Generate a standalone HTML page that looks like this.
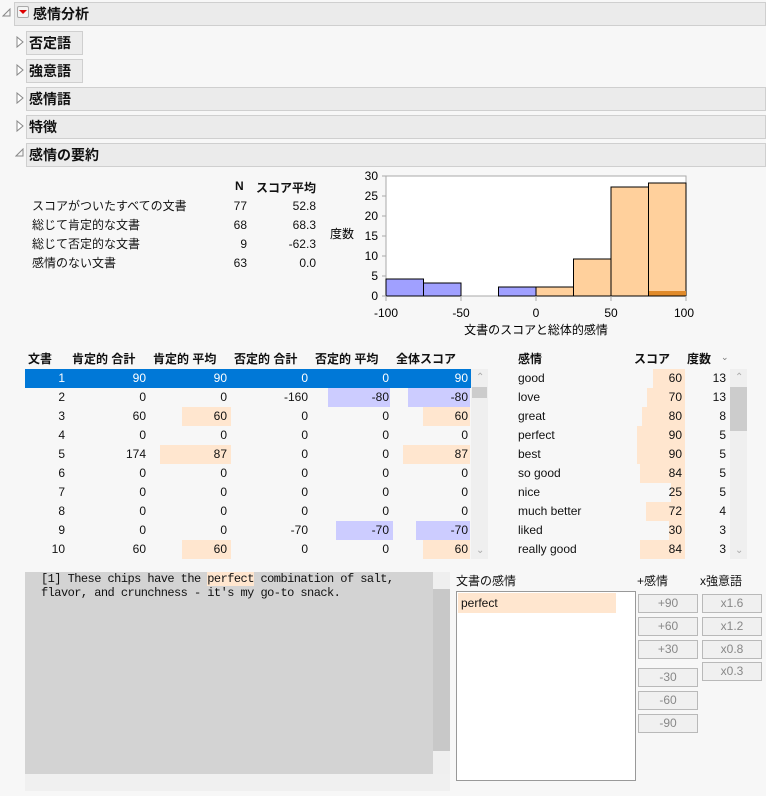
<!DOCTYPE html>
<html><head><meta charset="utf-8"><style>
*{margin:0;padding:0;box-sizing:border-box}
body{width:766px;height:796px;background:#f7f7f7;font-family:"Liberation Sans","Noto Sans CJK JP",sans-serif;font-size:12px;color:#111;position:relative;overflow:hidden}
.a{position:absolute}
.hdr{position:absolute;background:#ebebeb;border:1px solid #cfcfcf;font-weight:bold;font-size:14px;padding-left:2px;line-height:22px}
.r{text-align:right}
.btn{position:absolute;width:60px;height:19px;border:1px solid #b9b9b9;background:#f0f0f0;color:#888;text-align:center;line-height:17px;font-size:12px}
</style></head><body>
<div class="hdr" style="left:14px;top:2px;width:752px;height:24px;padding-left:18px">感情分析</div>
<svg class="a" style="left:2px;top:8px" width="10" height="10"><path d="M8 1 L8 8 L1 8 Z" fill="none" stroke="#888"/></svg>
<div class="a" style="left:17px;top:6px;width:12px;height:12px;border:1px solid #aaa;background:#f4f4f4;border-radius:2px"></div>
<svg class="a" style="left:19px;top:10px" width="8" height="5"><path d="M0 0 L8 0 L4 4 Z" fill="#d00"/></svg>

<div class="hdr" style="left:26px;top:31px;width:57px;height:24px">否定語</div>
<div class="hdr" style="left:26px;top:59px;width:57px;height:24px">強意語</div>
<div class="hdr" style="left:26px;top:87px;width:740px;height:24px">感情語</div>
<div class="hdr" style="left:26px;top:115px;width:740px;height:24px">特徴</div>
<div class="hdr" style="left:26px;top:143px;width:740px;height:24px">感情の要約</div>
<svg class="a" style="left:16px;top:36px" width="9" height="110"><path d="M1 1 L7 6 L1 11 Z M1 29 L7 34 L1 39 Z M1 57 L7 62 L1 67 Z M1 85 L7 90 L1 95 Z" fill="#fff" stroke="#888"/></svg>
<svg class="a" style="left:15px;top:148px" width="10" height="10"><path d="M8 1 L8 8 L1 8 Z" fill="none" stroke="#888"/></svg>

<div class="a" style="left:235px;top:179px;font-weight:bold">N</div>
<div class="a" style="left:256px;top:179px;font-weight:bold">スコア平均</div>
<div class="a" style="left:32px;top:197px;line-height:19px">スコアがついたすべての文書<br>総じて肯定的な文書<br>総じて否定的な文書<br>感情のない文書</div>
<div class="a r" style="left:200px;top:197px;width:47px;line-height:19px">77<br>68<br>9<br>63</div>
<div class="a r" style="left:260px;top:197px;width:56px;line-height:19px">52.8<br>68.3<br>-62.3<br>0.0</div>

<svg class="a" style="left:328px;top:166px" width="380" height="180" font-family="Liberation Sans, Noto Sans CJK JP, sans-serif" font-size="12">
<rect x="58" y="10" width="300" height="120" fill="#fff" stroke="#aaa"/>
<g stroke="#000" stroke-width="1">
<rect x="58" y="113" width="37.5" height="17" fill="#a0a0ff"/>
<rect x="95.5" y="117" width="37.5" height="13" fill="#a0a0ff"/>
<rect x="170.5" y="121" width="37.5" height="9" fill="#a0a0ff"/>
<rect x="208" y="121" width="37.5" height="9" fill="#ffd09c"/>
<rect x="245.5" y="93" width="37.5" height="37" fill="#ffd09c"/>
<rect x="283" y="21" width="37.5" height="109" fill="#ffd09c"/>
<rect x="320.5" y="17" width="37.5" height="113" fill="#ffd09c"/>
</g>
<rect x="321" y="125" width="37" height="4.5" fill="#e08a2a"/>
<g stroke="#aaa"><line x1="54" y1="10" x2="58" y2="10"/><line x1="54" y1="30" x2="58" y2="30"/><line x1="54" y1="50" x2="58" y2="50"/><line x1="54" y1="70" x2="58" y2="70"/><line x1="54" y1="90" x2="58" y2="90"/><line x1="54" y1="110" x2="58" y2="110"/><line x1="54" y1="130" x2="58" y2="130"/>
<line x1="58" y1="130" x2="58" y2="135"/><line x1="133" y1="130" x2="133" y2="135"/><line x1="208" y1="130" x2="208" y2="135"/><line x1="283" y1="130" x2="283" y2="135"/><line x1="358" y1="130" x2="358" y2="135"/></g>
<g text-anchor="end"><text x="50" y="14">30</text><text x="50" y="34">25</text><text x="50" y="54">20</text><text x="50" y="74">15</text><text x="50" y="94">10</text><text x="50" y="114">5</text><text x="50" y="134">0</text></g>
<text x="2" y="72">度数</text>
<g text-anchor="middle"><text x="58" y="151">-100</text><text x="133" y="151">-50</text><text x="208" y="151">0</text><text x="283" y="151">50</text><text x="356" y="151">100</text><text x="208" y="168">文書のスコアと総体的感情</text></g>
</svg>

<div class="a" style="left:28px;top:350px;font-weight:bold">文書</div>
<div class="a" style="left:72px;top:350px;font-weight:bold">肯定的 合計</div>
<div class="a" style="left:153px;top:350px;font-weight:bold">肯定的 平均</div>
<div class="a" style="left:234px;top:350px;font-weight:bold">否定的 合計</div>
<div class="a" style="left:315px;top:350px;font-weight:bold">否定的 平均</div>
<div class="a" style="left:396px;top:350px;font-weight:bold">全体スコア</div>
<div class="a" style="left:25px;top:369px;width:446px;height:19px;background:#0078d7"></div>
<div class="a" style="left:471px;top:369px;width:17px;height:190px;background:#efefef"></div>
<div class="a" style="left:472px;top:387px;width:15px;height:11px;background:#ccc"></div>
<div class="a" style="left:476px;top:372px;color:#aaa;font-size:10px">&#8963;</div>
<div class="a" style="left:476px;top:545px;color:#aaa;font-size:10px">&#8964;</div>
<div class="a" style="left:328px;top:388px;width:62px;height:19px;background:#ccccff"></div>
<div class="a" style="left:408px;top:388px;width:62px;height:19px;background:#ccccff"></div>
<div class="a" style="left:182px;top:407px;width:49px;height:19px;background:#ffe6cf"></div>
<div class="a" style="left:423px;top:407px;width:47px;height:19px;background:#ffe6cf"></div>
<div class="a" style="left:160px;top:445px;width:71px;height:19px;background:#ffe6cf"></div>
<div class="a" style="left:403px;top:445px;width:67px;height:19px;background:#ffe6cf"></div>
<div class="a" style="left:336px;top:521px;width:57px;height:19px;background:#ccccff"></div>
<div class="a" style="left:416px;top:521px;width:54px;height:19px;background:#ccccff"></div>
<div class="a" style="left:182px;top:540px;width:49px;height:19px;background:#ffe6cf"></div>
<div class="a" style="left:423px;top:540px;width:47px;height:19px;background:#ffe6cf"></div>
<div class="a r" style="left:25px;top:369px;width:40px;line-height:19px"><span style="color:#fff">1</span><br>2<br>3<br>4<br>5<br>6<br>7<br>8<br>9<br>10</div>
<div class="a r" style="left:86px;top:369px;width:60px;line-height:19px"><span style="color:#fff">90</span><br>0<br>60<br>0<br>174<br>0<br>0<br>0<br>0<br>60</div>
<div class="a r" style="left:167px;top:369px;width:60px;line-height:19px"><span style="color:#fff">90</span><br>0<br>60<br>0<br>87<br>0<br>0<br>0<br>0<br>60</div>
<div class="a r" style="left:248px;top:369px;width:60px;line-height:19px"><span style="color:#fff">0</span><br>-160<br>0<br>0<br>0<br>0<br>0<br>0<br>-70<br>0</div>
<div class="a r" style="left:329px;top:369px;width:60px;line-height:19px"><span style="color:#fff">0</span><br>-80<br>0<br>0<br>0<br>0<br>0<br>0<br>-70<br>0</div>
<div class="a r" style="left:408px;top:369px;width:60px;line-height:19px"><span style="color:#fff">90</span><br>-80<br>60<br>0<br>87<br>0<br>0<br>0<br>-70<br>60</div>

<div class="a" style="left:518px;top:350px;font-weight:bold">感情</div>
<div class="a" style="left:634px;top:350px;font-weight:bold">スコア</div>
<div class="a" style="left:687px;top:350px;font-weight:bold">度数</div>
<div class="a" style="left:721px;top:352px;color:#777;font-size:9px">&#8964;</div>
<div class="a" style="left:653px;top:369px;width:32px;height:19px;background:#ffe6cf"></div>
<div class="a" style="left:647px;top:388px;width:38px;height:19px;background:#ffe6cf"></div>
<div class="a" style="left:642px;top:407px;width:43px;height:19px;background:#ffe6cf"></div>
<div class="a" style="left:637px;top:426px;width:48px;height:38px;background:#ffe6cf"></div>
<div class="a" style="left:640px;top:464px;width:45px;height:19px;background:#ffe6cf"></div>
<div class="a" style="left:671px;top:483px;width:14px;height:19px;background:#ffe6cf"></div>
<div class="a" style="left:646px;top:502px;width:39px;height:19px;background:#ffe6cf"></div>
<div class="a" style="left:669px;top:521px;width:16px;height:19px;background:#ffe6cf"></div>
<div class="a" style="left:640px;top:540px;width:45px;height:19px;background:#ffe6cf"></div>
<div class="a" style="left:518px;top:369px;line-height:19px">good<br>love<br>great<br>perfect<br>best<br>so good<br>nice<br>much better<br>liked<br>really good</div>
<div class="a r" style="left:640px;top:369px;width:42px;line-height:19px">60<br>70<br>80<br>90<br>90<br>84<br>25<br>72<br>30<br>84</div>
<div class="a r" style="left:690px;top:369px;width:36px;line-height:19px">13<br>13<br>8<br>5<br>5<br>5<br>5<br>4<br>3<br>3</div>
<div class="a" style="left:730px;top:369px;width:17px;height:190px;background:#efefef"></div>
<div class="a" style="left:730px;top:387px;width:17px;height:44px;background:#ccc"></div>
<div class="a" style="left:735px;top:372px;color:#aaa;font-size:10px">&#8963;</div>
<div class="a" style="left:735px;top:545px;color:#aaa;font-size:10px">&#8964;</div>

<div class="a" style="left:25px;top:572px;width:408px;height:202px;background:#d3d3d3"></div>
<div class="a" style="left:433px;top:572px;width:17px;height:202px;background:#c8c8c8"></div>
<div class="a" style="left:433px;top:572px;width:17px;height:17px;background:#efefef"></div>
<div class="a" style="left:433px;top:751px;width:17px;height:23px;background:#efefef"></div>
<div class="a" style="left:25px;top:774px;width:425px;height:17px;background:#f0f0f0"></div>
<div class="a" style="left:41px;top:572px;font-family:'Liberation Mono',monospace;font-size:12px;line-height:14px;white-space:pre;letter-spacing:-0.55px">[1] These chips have the <span style="background:#ffe6cf">perfect</span> combination of salt,
flavor, and crunchness - it's my go-to snack.</div>

<div class="a" style="left:456px;top:572px">文書の感情</div>
<div class="a" style="left:456px;top:591px;width:180px;height:190px;background:#fff;border:1px solid #999"></div>
<div class="a" style="left:458px;top:593px;width:158px;height:20px;background:#ffe6cf;line-height:20px;padding-left:3px">perfect</div>
<div class="a" style="left:637px;top:572px">+感情</div>
<div class="a" style="left:700px;top:572px">x強意語</div>
<div class="btn" style="left:638px;top:594px">+90</div>
<div class="btn" style="left:638px;top:617px">+60</div>
<div class="btn" style="left:638px;top:640px">+30</div>
<div class="btn" style="left:638px;top:668px">-30</div>
<div class="btn" style="left:638px;top:691px">-60</div>
<div class="btn" style="left:638px;top:714px">-90</div>
<div class="btn" style="left:702px;top:594px">x1.6</div>
<div class="btn" style="left:702px;top:617px">x1.2</div>
<div class="btn" style="left:702px;top:640px">x0.8</div>
<div class="btn" style="left:702px;top:662px">x0.3</div>
</body></html>
